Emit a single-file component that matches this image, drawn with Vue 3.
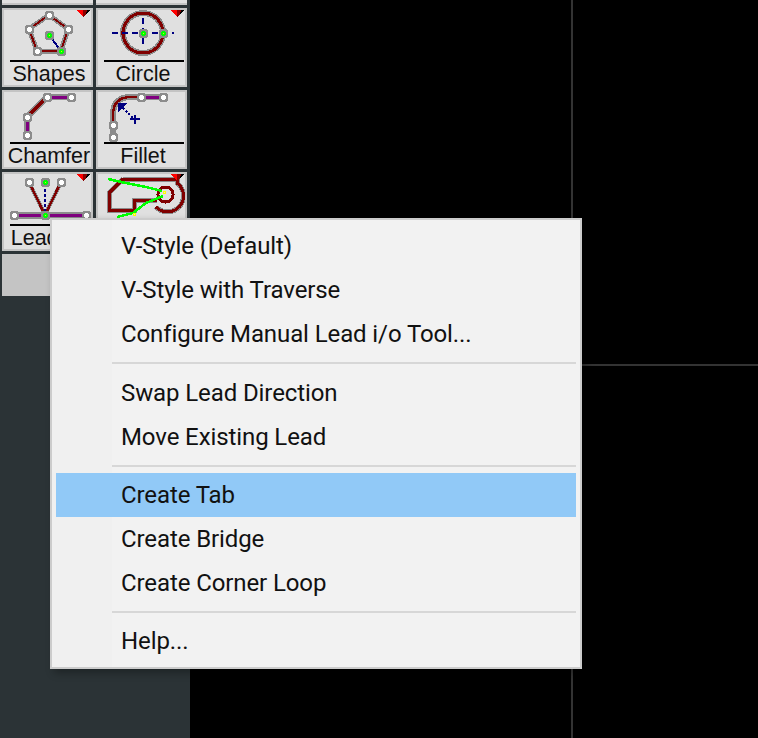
<template>
  <div class="screen">
    <aside class="sidebar">
      <div class="toolgrid">
        <div class="stub"></div>
        <div class="stub"></div>
        <div v-for="t in tools" :key="t.id" class="tool">
          <svg class="glyph" width="87" height="50" viewBox="2 2 87 50" shape-rendering="crispEdges">
            <path v-for="(p, i) in t.paths" :key="i" :d="p.d" :stroke="p.c" :stroke-width="p.w || 2" :stroke-dasharray="p.dash" :fill="p.fill || 'none'" />
            <template v-for="(n, i) in t.nodes" :key="'n' + i">
              <rect :x="n[0] - 4" :y="n[1] - 4" width="9" height="9" rx="2.5" fill="#8c8c8c" />
              <rect :x="n[0] - 2" :y="n[1] - 1" width="5" height="3" :fill="n[2] ? '#00ff00' : '#fff'" />
              <rect :x="n[0] - 1" :y="n[1] - 2" width="3" height="5" :fill="n[2] ? '#00ff00' : '#fff'" />
              <rect v-if="n[2]" :x="n[0]" :y="n[1]" width="1" height="1" fill="#e4ff00" />
            </template>
            <template v-if="t.menu">
              <path d="M74 2H88L81 9Z" fill="#f00" />
              <path d="M81 2H88L81 9Z" fill="#8a0000" />
              <path d="M85 2H88L84 6Z" fill="#000" />
            </template>
          </svg>
          <div class="rule"></div>
          <div class="label">{{ t.name }}</div>
        </div>
      </div>
      <div class="filler"></div>
    </aside>
    <main class="canvas">
      <div class="grid-v"></div>
      <div class="grid-h"></div>
    </main>
    <div class="menu">
      <template v-for="(item, i) in menu" :key="i">
        <div v-if="item === '-'" class="sep"></div>
        <div v-else class="item" :class="{ active: item === 'Create Tab' }">{{ item }}</div>
      </template>
    </div>
  </div>
</template>

<script setup>
const gray = '#8c8c8c'
const red = '#800000'
const purple = '#800080'
const navy = '#000080'
const green = '#00ff00'

// icon coordinates are relative to the top-left corner of the button
const tools = [
  {
    id: 'shapes',
    name: 'Shapes',
    menu: true,
    paths: [
      { d: 'M47 7L27 21L35 43H59L66 21Z', c: gray, w: 5 },
      { d: 'M47 7L27 21L35 43H59L66 21Z', c: red, w: 2 },
      { d: 'M47 27L59 43', c: navy }
    ],
    nodes: [[47, 7], [27, 21], [66, 21], [35, 43], [47, 27, true], [59, 43, true]]
  },
  {
    id: 'circle',
    name: 'Circle',
    menu: true,
    paths: [
      { d: 'M47 5a20 20 0 1 0 .01 0Z', c: gray, w: 6 },
      { d: 'M47 5a20 20 0 1 0 .01 0Z', c: red, w: 3 },
      { d: 'M47 10V40M16 25H78', c: navy, dash: '6 4' }
    ],
    nodes: [[47, 25, true], [67, 25, true]]
  },
  {
    id: 'chamfer',
    name: 'Chamfer',
    paths: [
      { d: 'M25 45V27L45 7H69', c: gray, w: 6 },
      { d: 'M25 27L45 7', c: red, w: 3 },
      { d: 'M25 45V27M45 7H69', c: purple, w: 3 }
    ],
    nodes: [[25, 27], [25, 45], [45, 7], [69, 7]]
  },
  {
    id: 'fillet',
    name: 'Fillet',
    paths: [
      { d: 'M17 47V25Q17 7 35 7H67', c: gray, w: 6 },
      { d: 'M17 40V25Q17 7 35 7H45', c: red, w: 2.5 },
      { d: 'M45 7H67', c: purple, w: 3 },
      { d: 'M24 15L37 28', c: navy, dash: '2 2' },
      { d: 'M23 14H29L23 20Z', c: navy, fill: navy },
      { d: 'M39 25V34M34 29H44', c: navy }
    ],
    nodes: [[17, 35], [17, 47], [45, 7], [67, 7]]
  },
  {
    id: 'leads',
    name: 'Lead i/o',
    menu: true,
    paths: [
      { d: 'M12 43H84', c: gray, w: 7 },
      { d: 'M12 43H84', c: purple, w: 3 },
      { d: 'M27 10L43 43M59 10L43 43', c: gray, w: 4 },
      { d: 'M27 10L43 43M59 10L43 43', c: red, w: 2.5 },
      { d: 'M43 12V42', c: navy, dash: '3 2', w: 2 }
    ],
    nodes: [[27, 10], [43, 10, true], [59, 10], [12, 43], [84, 43], [43, 43, true]]
  },
  {
    id: 'tab',
    name: '',
    menu: true,
    paths: [
      { d: 'M27 7L13 21V38H38V28H61M27 7H81V11A16 16 0 1 1 60 35', c: gray, w: 5 },
      { d: 'M27 7L13 21V38H38V28H61M27 7H81V11A16 16 0 1 1 60 35', c: red, w: 3 },
      { d: 'M69.5 15a7.5 7.5 0 1 0 .01 0Z', c: red, w: 3 },
      { d: 'M12 7L30 11L50 15L66 19', c: green, w: 2.5 },
      { d: 'M67 24L50 31L37 41L21 45', c: green, w: 2.5 },
      { d: 'M67 19h2v2h-2zM37 41h2v2h-2z', c: '#ffff00', w: 1 }
    ],
    nodes: []
  }
]

const menu = [
  'V-Style (Default)',
  'V-Style with Traverse',
  'Configure Manual Lead i/o Tool...',
  '-',
  'Swap Lead Direction',
  'Move Existing Lead',
  '-',
  'Create Tab',
  'Create Bridge',
  'Create Corner Loop',
  '-',
  'Help...'
]
</script>

<style>
html, body {
  margin: 0;
  background: #000;
  overflow: hidden;
}
</style>

<style scoped>
.screen {
  position: relative;
  display: flex;
  width: 758px;
  height: 738px;
  overflow: hidden;
}

.sidebar {
  width: 190px;
  flex: none;
  display: flex;
  flex-direction: column;
  background: #2b3336;
  box-sizing: border-box;
  padding: 0 2px;
}

.toolgrid {
  display: grid;
  grid-template-columns: 91px 91px;
  grid-template-rows: 5px 79px 79px 79px;
  gap: 3px;
}

.stub {
  background: #e0e0e0;
  border-bottom: 2px solid #c4c4c4;
}

.tool {
  box-sizing: border-box;
  background: #e0e0e0;
  border: 2px solid #c4c4c4;
  overflow: hidden;
}

.glyph {
  display: block;
  width: 87px;
  height: 50px;
}

.rule {
  height: 2px;
  margin: 0 1px 0 6px;
  background: #000;
}

.label {
  margin-top: 1px;
  padding-left: 3px;
  text-align: center;
  white-space: nowrap;
  font: 21.5px/22px "Liberation Sans", Arial, sans-serif;
  color: #111;
}

.filler {
  width: 186px;
  height: 42px;
  margin-top: 3px;
  background: #c4c4c4;
}

.canvas {
  position: relative;
  flex: 1;
  background: #000;
}

.grid-v {
  position: absolute;
  left: 381px;
  top: 0;
  bottom: 0;
  width: 2px;
  background: #333;
}

.grid-h {
  position: absolute;
  left: 0;
  right: 0;
  top: 364px;
  height: 2px;
  background: #333;
}

.menu {
  position: absolute;
  left: 50px;
  top: 218px;
  width: 532px;
  height: 451px;
  box-sizing: border-box;
  border: 2px solid #ccc;
  background: linear-gradient(90deg, #f0f0f0 60px, #f2f2f2 60px);
  box-shadow: 4px 4px 8px rgba(0, 0, 0, 0.3);
  padding: 4px 4px 0;
  font: 24px/45px Roboto, "Noto Sans", sans-serif;
  letter-spacing: -0.1px;
  color: #111;
}

.item {
  height: 44px;
  padding-left: 65px;
  white-space: nowrap;
}

.item:last-child {
  line-height: 43px;
}

.item.active {
  background: #91c9f7;
}

.sep {
  height: 2px;
  margin: 6px 0 6.5px 56px;
  background: #d7d7d7;
}
</style>
